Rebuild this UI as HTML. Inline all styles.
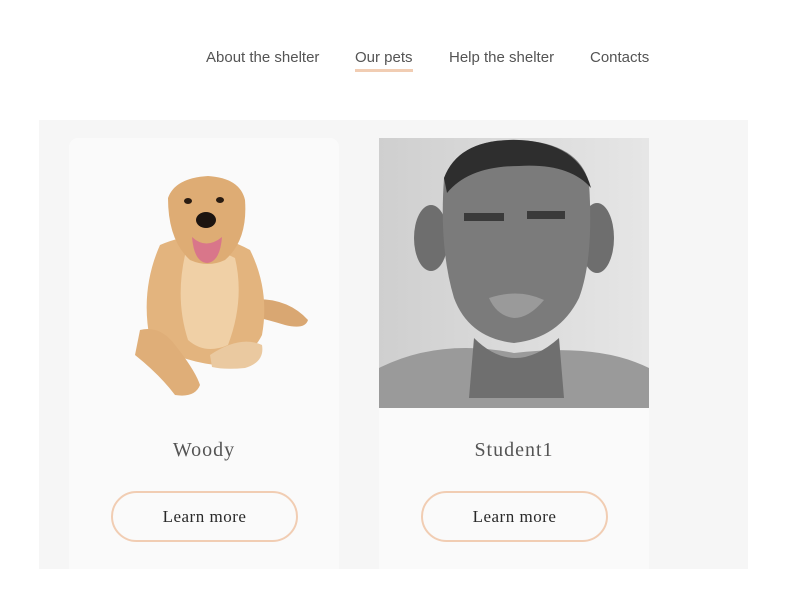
<!DOCTYPE html>
<html><head><meta charset="utf-8"><style>
*{margin:0;padding:0;box-sizing:border-box}
body{width:800px;height:600px;background:#fff;position:relative;overflow:hidden;font-family:"Liberation Sans",Arial,sans-serif}
.nav{position:absolute;top:49px;font-size:15px;color:#545454;white-space:nowrap}
.sec{position:absolute;left:39px;top:120px;width:709px;height:449px;background:#f6f6f6}
.card{position:absolute;top:138px;width:270px;height:431px;background:#fafafa;border-radius:9px 9px 0 0}
.name{position:absolute;top:301px;width:100%;text-align:center;font-family:"Liberation Serif",Georgia,serif;font-size:20px;letter-spacing:1px;color:#545454}
.btn{position:absolute;top:353px;left:42px;width:187px;height:51px;border:2px solid #f1cdb3;border-radius:30px;text-align:center;line-height:47px;font-family:"Liberation Serif",Georgia,serif;font-size:17px;letter-spacing:.5px;color:#292929}
</style></head><body>
<div class="nav" style="left:206px">About the shelter</div>
<div class="nav" style="left:355px">Our pets</div>
<div style="position:absolute;left:355px;top:69px;width:58px;height:3px;background:#f1cdb3"></div>
<div class="nav" style="left:449px">Help the shelter</div>
<div class="nav" style="left:590px">Contacts</div>
<div class="sec"></div>
<div class="card" style="left:69px">
<svg width="270" height="280" style="position:absolute;left:0;top:0" viewBox="69 138 270 280">
<path d="M245 300 Q285 295 308 320 Q305 330 285 325 Q262 318 245 315Z" fill="#d9a772"/>
<path d="M160 245 Q205 225 250 250 Q270 290 262 335 Q250 360 215 365 Q175 360 150 340 Q140 290 160 245Z" fill="#e3b47e"/>
<path d="M185 255 Q210 245 235 258 Q245 300 228 345 Q205 355 188 340 Q175 300 185 255Z" fill="#f0d0a6"/>
<path d="M140 330 Q160 325 175 345 Q195 370 200 385 Q195 398 175 395 Q160 375 135 355Z" fill="#dfae78"/>
<path d="M210 355 Q240 335 262 345 Q265 362 245 368 Q225 370 212 367Z" fill="#eac9a0"/>
<path d="M168 198 Q175 178 208 176 Q240 178 245 200 Q248 240 225 260 Q208 268 190 260 Q168 240 168 198Z" fill="#deac74"/>
<ellipse cx="188" cy="201" rx="4" ry="3" fill="#2a1c12"/><ellipse cx="220" cy="200" rx="4" ry="3" fill="#2a1c12"/>
<ellipse cx="206" cy="220" rx="10" ry="8" fill="#1c1410"/>
<path d="M192 237 Q206 250 222 237 Q220 262 207 263 Q194 262 192 237Z" fill="#d9768a"/>
</svg>
<div class="name">Woody</div><div class="btn">Learn more</div></div>
<div class="card" style="left:379px;border-radius:0">
<svg width="270" height="270" style="position:absolute;left:0;top:0">
<defs><linearGradient id="g" x1="0" y1="0" x2="1" y2="0"><stop offset="0" stop-color="#cfcfcf"/><stop offset="1" stop-color="#e6e6e6"/></linearGradient></defs>
<rect width="270" height="270" fill="url(#g)"/>
<path d="M0 230 Q60 200 135 215 Q220 205 270 230 V270 H0Z" fill="#9a9a9a"/>
<path d="M95 200 Q135 240 180 200 L185 260 H90Z" fill="#6f6f6f"/>
<ellipse cx="52" cy="100" rx="17" ry="33" fill="#6e6e6e"/>
<ellipse cx="218" cy="100" rx="17" ry="35" fill="#6e6e6e"/>
<path d="M65 40 Q80 0 140 2 Q200 5 210 45 Q215 120 200 160 Q180 200 135 205 Q90 200 75 160 Q60 110 65 40Z" fill="#7b7b7b"/>
<path d="M65 40 Q80 0 140 2 Q200 5 212 50 Q190 25 140 28 Q90 28 68 55Z" fill="#2e2e2e"/>
<rect x="85" y="75" width="40" height="8" fill="#3a3a3a"/><rect x="148" y="73" width="38" height="8" fill="#3a3a3a"/>
<path d="M110 160 Q140 150 165 162 Q150 180 135 180 Q118 178 110 160Z" fill="#9a9a9a"/>
</svg>
<div class="name">Student1</div><div class="btn">Learn more</div></div>
</body></html>
